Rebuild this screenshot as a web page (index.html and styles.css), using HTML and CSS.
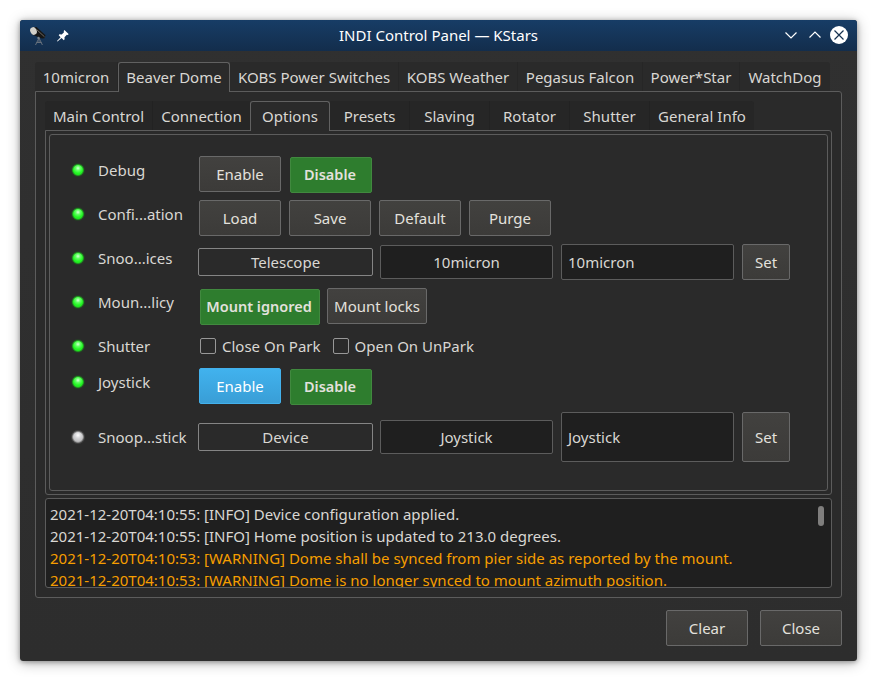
FILE: index.html
```html
<!DOCTYPE html>
<html lang="en">
<head>
<meta charset="utf-8">
<title>INDI Control Panel — KStars</title>
<link rel="stylesheet" href="styles.css">
</head>
<body>
<main class="window">
  <header class="titlebar">
    <div class="title-left">
      <svg width="18" height="20" viewBox="0 0 18 20">
        <path d="M10 12 6.500 19M10 12v5M10 12l3.400 7M7.500 16.500h5" stroke="#66707c" stroke-width="1" fill="none"/>
        <path d="M3 1.500 7.500 1 16.500 9.300 15.500 12.300 12.800 12.600 3 8.500z" fill="#161616"/>
        <path d="M7.500 3.500 15.500 10.800" stroke="#6b6860" stroke-width="1"/>
        <ellipse cx="4.500" cy="5" rx="3.200" ry="3.900" transform="rotate(-25 4.500 5)" fill="#d2d0ca"/>
        <circle cx="9.500" cy="12" r="1.200" fill="#7d858d"/>
      </svg>
      <svg class="pin" width="12" height="12" viewBox="0 0 12 12">
        <path d="M7.400 0 11.600 4 11 5 9.800 4.800 7.500 7.200 7.600 9.300 6.800 10.200 4.600 8 .5 11.500 0 11 3.600 7.200 1.700 5.200 2.400 4.300 4.700 4.400 7 2.200 6.700 1z" fill="#fff"/>
      </svg>
    </div>
    <h1>INDI Control Panel — KStars</h1>
    <div class="title-right">
      <svg width="66" height="20" viewBox="0 0 66 20" fill="none">
        <path d="M3.500 7.500 9 13l5.500-5.500M27.500 12.500 33 7l5.500 5.500" stroke="#fff" stroke-width="1.200"/>
        <circle cx="57" cy="10" r="9" fill="#fff"/>
        <path d="m52.500 5.500 9 9m0-9-9 9" stroke="#15304f" stroke-width="1.200"/>
      </svg>
    </div>
  </header>
  <nav class="tabs device-tabs">
    <span class="tab">10micron</span><span class="tab active">Beaver Dome</span><span class="tab">KOBS Power Switches</span><span class="tab">KOBS Weather</span><span class="tab">Pegasus Falcon</span><span class="tab">Power*Star</span><span class="tab">WatchDog</span>
  </nav>
  <section class="device-pane">
    <nav class="tabs group-tabs">
      <span class="tab">Main Control</span><span class="tab">Connection</span><span class="tab active">Options</span><span class="tab">Presets</span><span class="tab">Slaving</span><span class="tab">Rotator</span><span class="tab">Shutter</span><span class="tab">General Info</span>
    </nav>
    <div class="group-pane">
      <div class="properties">
        <div class="row">
          <div class="lead"><i class="led"></i><span>Debug</span></div>
          <div class="btn">Enable</div><div class="btn on">Disable</div>
        </div>
        <div class="row">
          <div class="lead"><i class="led"></i><span>Confi...ation</span></div>
          <div class="btn">Load</div><div class="btn">Save</div><div class="btn">Default</div><div class="btn">Purge</div>
        </div>
        <div class="row fields">
          <div class="lead"><i class="led"></i><span>Snoo...ices</span></div>
          <div class="name">Telescope</div><div class="value">10micron</div><div class="entry">10micron</div><div class="btn set">Set</div>
        </div>
        <div class="row policy">
          <div class="lead"><i class="led"></i><span>Moun...licy</span></div>
          <div class="btn on">Mount ignored</div><div class="btn">Mount locks</div>
        </div>
        <div class="row checks">
          <div class="lead"><i class="led"></i><span>Shutter</span></div>
          <label><i class="box"></i>Close On Park</label><label><i class="box"></i>Open On UnPark</label>
        </div>
        <div class="row">
          <div class="lead"><i class="led"></i><span>Joystick</span></div>
          <div class="btn hover">Enable</div><div class="btn on">Disable</div>
        </div>
        <div class="row fields tall">
          <div class="lead"><i class="led idle"></i><span>Snoop...stick</span></div>
          <div class="name">Device</div><div class="value">Joystick</div><div class="entry">Joystick</div><div class="btn set">Set</div>
        </div>
      </div>
    </div>
    <div class="log">
      <div class="lines">
        <p>2021-12-20T04:10:55: [INFO] Device configuration applied.</p>
        <p>2021-12-20T04:10:55: [INFO] Home position is updated to 213.0 degrees.</p>
        <p class="warn">2021-12-20T04:10:53: [WARNING] Dome shall be synced from pier side as reported by the mount.</p>
        <p class="warn">2021-12-20T04:10:53: [WARNING] Dome is no longer synced to mount azimuth position.</p>
      </div>
      <i class="thumb"></i>
    </div>
  </section>
  <footer><div class="btn">Clear</div><div class="btn">Close</div></footer>
</main>
</body>
</html>
```
FILE: styles.css
```css
* { box-sizing: border-box; }
html, body { margin: 0; height: 100%; background: #fff; overflow: hidden; }
body {
  padding: 20px;
  font: 15px/20px "Noto Sans", sans-serif;
  color: #d9d7d3;
}
.window {
  width: 837px; height: 641px;
  background: linear-gradient(#303030, #2d2d2d);
  border-radius: 3px;
  box-shadow: 0 2px 14px rgba(0,0,0,.28), 0 1px 5px rgba(0,0,0,.35);
}
.titlebar {
  height: 31px;
  display: grid; grid-template-columns: 80px 1fr 80px; align-items: center;
  background: linear-gradient(#173d66, #132d4c);
  border-radius: 3px 3px 0 0;
}
h1 { margin: 0; font-size: 15px; font-weight: 400; text-align: center; color: #fff; line-height: 31px; }
.title-left { display: flex; padding-left: 9px; gap: 10px; }
.title-left .pin { margin-top: 4px; }
.title-right { display: flex; justify-content: flex-end; padding-right: 9px; }
.title-right svg { display: block; flex: none; margin-top: -1px; }

.tabs { display: flex; height: 30px; position: relative; margin-bottom: -1px; }
.tab {
  height: 29px; padding-top: 5px; flex: none;
  text-align: center; white-space: nowrap;
  background: #2a2a2a; border-right: 1px solid #262626;
}
.tab:first-child { border-top-left-radius: 3px; }
.tab:last-child { border-top-right-radius: 3px; border-right: 0; }
.tab.active {
  height: 30px; padding-top: 4px;
  border: 1px solid #616161; border-bottom: 0;
  border-radius: 3px 3px 0 0; background: #2a2a2a;
}
.device-tabs { margin: 11px 0 -1px 15px; }
.device-tabs .tab:nth-child(1) { width: 83px; }
.device-tabs .tab:nth-child(2) { width: 112px; }
.device-tabs .tab:nth-child(3) { width: 169px; }
.device-tabs .tab:nth-child(4) { width: 119px; }
.device-tabs .tab:nth-child(5) { width: 125px; }
.device-tabs .tab:nth-child(6) { width: 97px; }
.device-tabs .tab:nth-child(7) { width: 90px; }
.group-tabs .tab { width: 80px; background: #262626; border-right-color: #222; }
.group-tabs .tab.active { background: #2a2a2a; border-right-color: #616161; }
.group-tabs .tab:nth-child(1) { width: 108px; }
.group-tabs .tab:nth-child(2) { width: 97px; border-right: 0; }
.group-tabs .tab:nth-child(8) { width: 104px; }

.device-pane {
  margin-left: 15px; width: 807px; height: 507px; padding: 9px;
  background: #2a2a2a; border: 1px solid #5c5c5c; border-radius: 0 3px 3px 3px;
}
.group-pane {
  height: 365px; padding: 3px;
  border: 1px solid #5c5c5c; border-radius: 0 3px 3px 3px;
}
.properties {
  height: 357px; padding: 21px 0 0 22px;
  border: 1px solid #5c5c5c; border-radius: 3px;
  display: flex; flex-direction: column; gap: 8px;
}
.row { display: flex; height: 36px; gap: 8px; flex: none; }
.lead { width: 127px; margin-right: -8px; height: 28px; display: flex; align-items: center; flex: none; }
.led {
  width: 12px; height: 12px; margin-right: 14px; border-radius: 50%; flex: none;
  border: 1px solid #20a020; box-shadow: 0 0 0 1px #264026;
  background: radial-gradient(circle at 50% 32%, #d9ffd9 0, #62ff62 28%, #22f522 60%, #1ee51e 100%);
}
.led.idle {
  border-color: #8a8a8a; box-shadow: 0 0 0 1px #434343;
  background: radial-gradient(circle at 50% 32%, #fff 0, #d6d6d8 35%, #aaa 100%);
}
.lead span { padding-bottom: 0; }
.btn {
  width: 82px; height: 36px; flex: none;
  display: flex; align-items: center; justify-content: center;
  border: 1px solid #696969; border-radius: 2px;
  background: linear-gradient(#42413f, #3c3b39);
  color: #e3e1dd; white-space: nowrap;
}
.btn.on {
  margin: 1px 0 0 1px; padding: 0 2px 2px 0;
  background: #2e7d2e; border-color: #41893f;
  font-size: 14.5px; font-weight: 600;
}
.btn.hover { background: linear-gradient(#41b2ee, #399ed6); border-color: #43b1ec; color: #fff; }
.btn.set { width: 48px; }
.fields { align-items: center; }
.fields .lead { align-self: flex-start; width: 126px; }
.tall { height: 50px; }
.tall .lead, .tall .btn { height: 50px; }
.name, .value, .entry {
  display: flex; align-items: center; justify-content: center; flex: none;
  border: 1px solid #5c5c5c; border-radius: 2px; background: #1f1f1f;
}
.name { width: 175px; height: 28px; background: none; border-color: #858585; margin-right: -1px; }
.value { width: 173px; height: 34px; }
.entry { width: 173px; height: 36px; justify-content: flex-start; padding-left: 6px; }
.tall .entry { height: 50px; }
.policy { gap: 7px; }
.policy .lead { margin-right: -7px; }
.policy .btn { width: 100px; }
.policy .btn.on { width: 120px; }
.checks { height: 28px; gap: 12px; align-items: center; }
.checks .lead { margin-right: -11px; }
.checks label { display: flex; align-items: center; gap: 6px; }
.box { width: 16px; height: 16px; border: 1px solid #989898; border-radius: 2px; }
.log {
  margin-top: 3px; height: 90px; display: flex; justify-content: space-between;
  background: #1f1f1f; border: 1px solid #5c5c5c; border-radius: 3px;
}
.lines { height: 88px; padding: 4px 0 0 4px; overflow: hidden; }
.lines p { margin: 0; line-height: 22px; white-space: nowrap; }
.warn { color: #f69e00; }
.thumb { width: 6px; height: 20px; margin: 7px 7px 0 0; border-radius: 3px; background: #7f7e7d; }
footer { display: flex; justify-content: flex-end; gap: 12px; padding: 12px 15px 0 0; }
```
